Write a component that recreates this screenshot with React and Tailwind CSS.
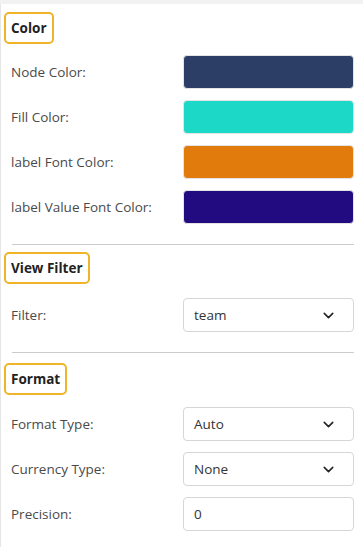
import { ChevronDown } from 'lucide-react';

const font = { fontFamily: '"Open Sans", "Noto Sans", sans-serif' };

function Heading({ children }) {
    return (
        <div className="flex">
            <div className="border-2 border-[#f0b429] rounded-[5px] px-[5px] h-[32px] flex items-center text-[13.5px] font-bold text-[#222]">
                {children}
            </div>
        </div>
    );
}

function Row({ label, children }) {
    return (
        <div className="flex items-center h-[34px]">
            <div className="w-[179px] pl-[7px] text-[13.5px] text-[#4a4a4a]">{label}</div>
            <div className="w-[171px]">{children}</div>
        </div>
    );
}

function Swatch({ color }) {
    return <div className={`h-[34px] rounded-[4px] border border-[#e4e4e4] ${color}`}></div>;
}

function Select({ value }) {
    return (
        <div className="h-[34px] rounded-[4px] border border-[#d6d6d6] flex items-center justify-between pl-[10px] pr-[16px] text-[13.5px] text-[#333]">
            <span>{value}</span>
            <ChevronDown size={17} strokeWidth={2.2} className="text-[#222]" />
        </div>
    );
}

export default function App() {
    return (
        <div className="w-[363px] h-[547px] bg-white overflow-hidden" style={font}>
            <div className="h-[4px] bg-[#f2f2f2]"></div>
            <div className="border-l border-[#e6e6e6] h-[543px] pl-[3px] pr-[9px]">
                {/* Color */}
                <div className="pt-[8px]">
                    <Heading>Color</Heading>
                    <div className="mt-[11px] flex flex-col gap-[11px]">
                        <Row label="Node Color:"><Swatch color="bg-[#2c3e66]" /></Row>
                        <Row label="Fill Color:"><Swatch color="bg-[#1bd9c6]" /></Row>
                        <Row label="label Font Color:"><Swatch color="bg-[#e07b0c]" /></Row>
                        <Row label="label Value Font Color:"><Swatch color="bg-[#220b80]" /></Row>
                    </div>
                </div>
                <div className="mt-[20px] ml-[8px] border-t border-[#cccccc]"></div>

                {/* View Filter */}
                <div className="pt-[7px]">
                    <Heading>View Filter</Heading>
                    <div className="mt-[14px]">
                        <Row label="Filter:"><Select value="team" /></Row>
                    </div>
                </div>
                <div className="mt-[20px] ml-[8px] border-t border-[#cccccc]"></div>

                {/* Format */}
                <div className="pt-[10px]">
                    <Heading>Format</Heading>
                    <div className="mt-[12px] flex flex-col gap-[11px]">
                        <Row label="Format Type:"><Select value="Auto" /></Row>
                        <Row label="Currency Type:"><Select value="None" /></Row>
                        <Row label="Precision:">
                            <div className="h-[34px] rounded-[4px] border border-[#d6d6d6] flex items-center pl-[10px] text-[13.5px] text-[#333]">0</div>
                        </Row>
                    </div>
                </div>
            </div>
        </div>
    );
}
